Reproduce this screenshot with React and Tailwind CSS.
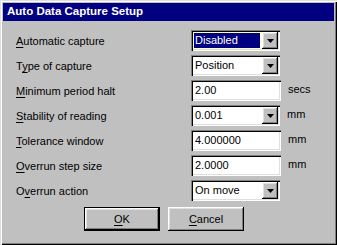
import React from 'react';

const sunken =
  'shadow-[inset_1px_1px_0_#808080,inset_2px_2px_0_#000000,inset_-1px_-1px_0_#ffffff,inset_-2px_-2px_0_#dfdfdf]';
const raised =
  'shadow-[inset_-1px_-1px_0_#000000,inset_1px_1px_0_#ffffff,inset_-2px_-2px_0_#808080,inset_2px_2px_0_#dfdfdf]';

// label text with an underlined mnemonic letter
const Label = ({ pre = '', hot, post }) => (
  <span>
    {pre}
    <span className="underline underline-offset-[2px]">{hot}</span>
    {post}
  </span>
);

const ArrowButton = () => (
  <div className={`w-[16px] h-[17px] bg-[#c0c0c0] flex items-center justify-center ${raised}`}>
    <svg width="7" height="4" viewBox="0 0 7 4">
      <path d="M0 0h7L3.5 4z" fill="#000" />
    </svg>
  </div>
);

const Dropdown = ({ value, focused }) => (
  <div className={`w-[89px] h-[21px] bg-white flex items-center pl-[2px] pr-[2px] ${sunken}`}>
    <div className="flex-1 h-[17px] flex items-center">
      {focused ? (
        <div className="ml-[1px] mr-[2px] flex-1 h-[15px] bg-[#000080] text-white outline-1 outline-dotted outline-[#ffff80] flex items-center pl-[1px]">
          {value}
        </div>
      ) : (
        <span className="pl-[2px]">{value}</span>
      )}
    </div>
    <ArrowButton />
  </div>
);

const TextBox = ({ value }) => (
  <div className={`w-[90px] h-[21px] bg-white flex items-center pl-[4px] ${sunken}`}>{value}</div>
);

const rows = [
  { label: <Label hot="A" post="utomatic capture" />, ctrl: <Dropdown value="Disabled" focused /> },
  { label: <Label pre="T" hot="y" post="pe of capture" />, ctrl: <Dropdown value="Position" /> },
  { label: <Label hot="M" post="inimum period halt" />, ctrl: <TextBox value="2.00" />, unit: 'secs' },
  { label: <Label hot="S" post="tability of reading" />, ctrl: <Dropdown value="0.001" />, unit: 'mm' },
  { label: <Label hot="T" post="olerance window" />, ctrl: <TextBox value="4.000000" />, unit: 'mm' },
  { label: <Label hot="O" post="verrun step size" />, ctrl: <TextBox value="2.0000" />, unit: 'mm' },
  { label: <Label pre="O" hot="v" post="errun action" />, ctrl: <Dropdown value="On move" /> },
];

export default function App() {
  return (
    <div
      className="w-[337px] h-[245px] bg-[#c0c0c0] p-[3px] flex flex-col text-[11px] text-black shadow-[inset_1px_1px_0_#dfdfdf,inset_2px_2px_0_#ffffff,inset_-1px_-1px_0_#000000,inset_-2px_-2px_0_#808080]"
      style={{ fontFamily: '"Liberation Sans", Arial, sans-serif' }}
    >
      {/* Title bar */}
      <div className="h-[18px] bg-[#000080] text-white font-bold text-[11.5px] flex items-center pl-[4px]">
        Auto Data Capture Setup
      </div>

      {/* Fields */}
      <div className="flex flex-col pt-[9px] pl-[13px]">
        {rows.map((r, i) => (
          <div key={i} className="h-[25px] flex items-start">
            <div className="w-[175px] pt-[3px]">{r.label}</div>
            {r.ctrl}
            {r.unit && <span className="ml-[7px] mt-[1px]">{r.unit}</span>}
          </div>
        ))}
      </div>

      {/* Buttons */}
      <div className="flex gap-[8px] pl-[81px] pt-[2px]">
        <button className={`w-[76px] h-[24px] bg-[#c0c0c0] border border-black flex items-center justify-center ${raised}`}>
          <Label hot="O" post="K" />
        </button>
        <button className={`w-[76px] h-[24px] bg-[#c0c0c0] flex items-center justify-center ${raised}`}>
          <Label hot="C" post="ancel" />
        </button>
      </div>
    </div>
  );
}
